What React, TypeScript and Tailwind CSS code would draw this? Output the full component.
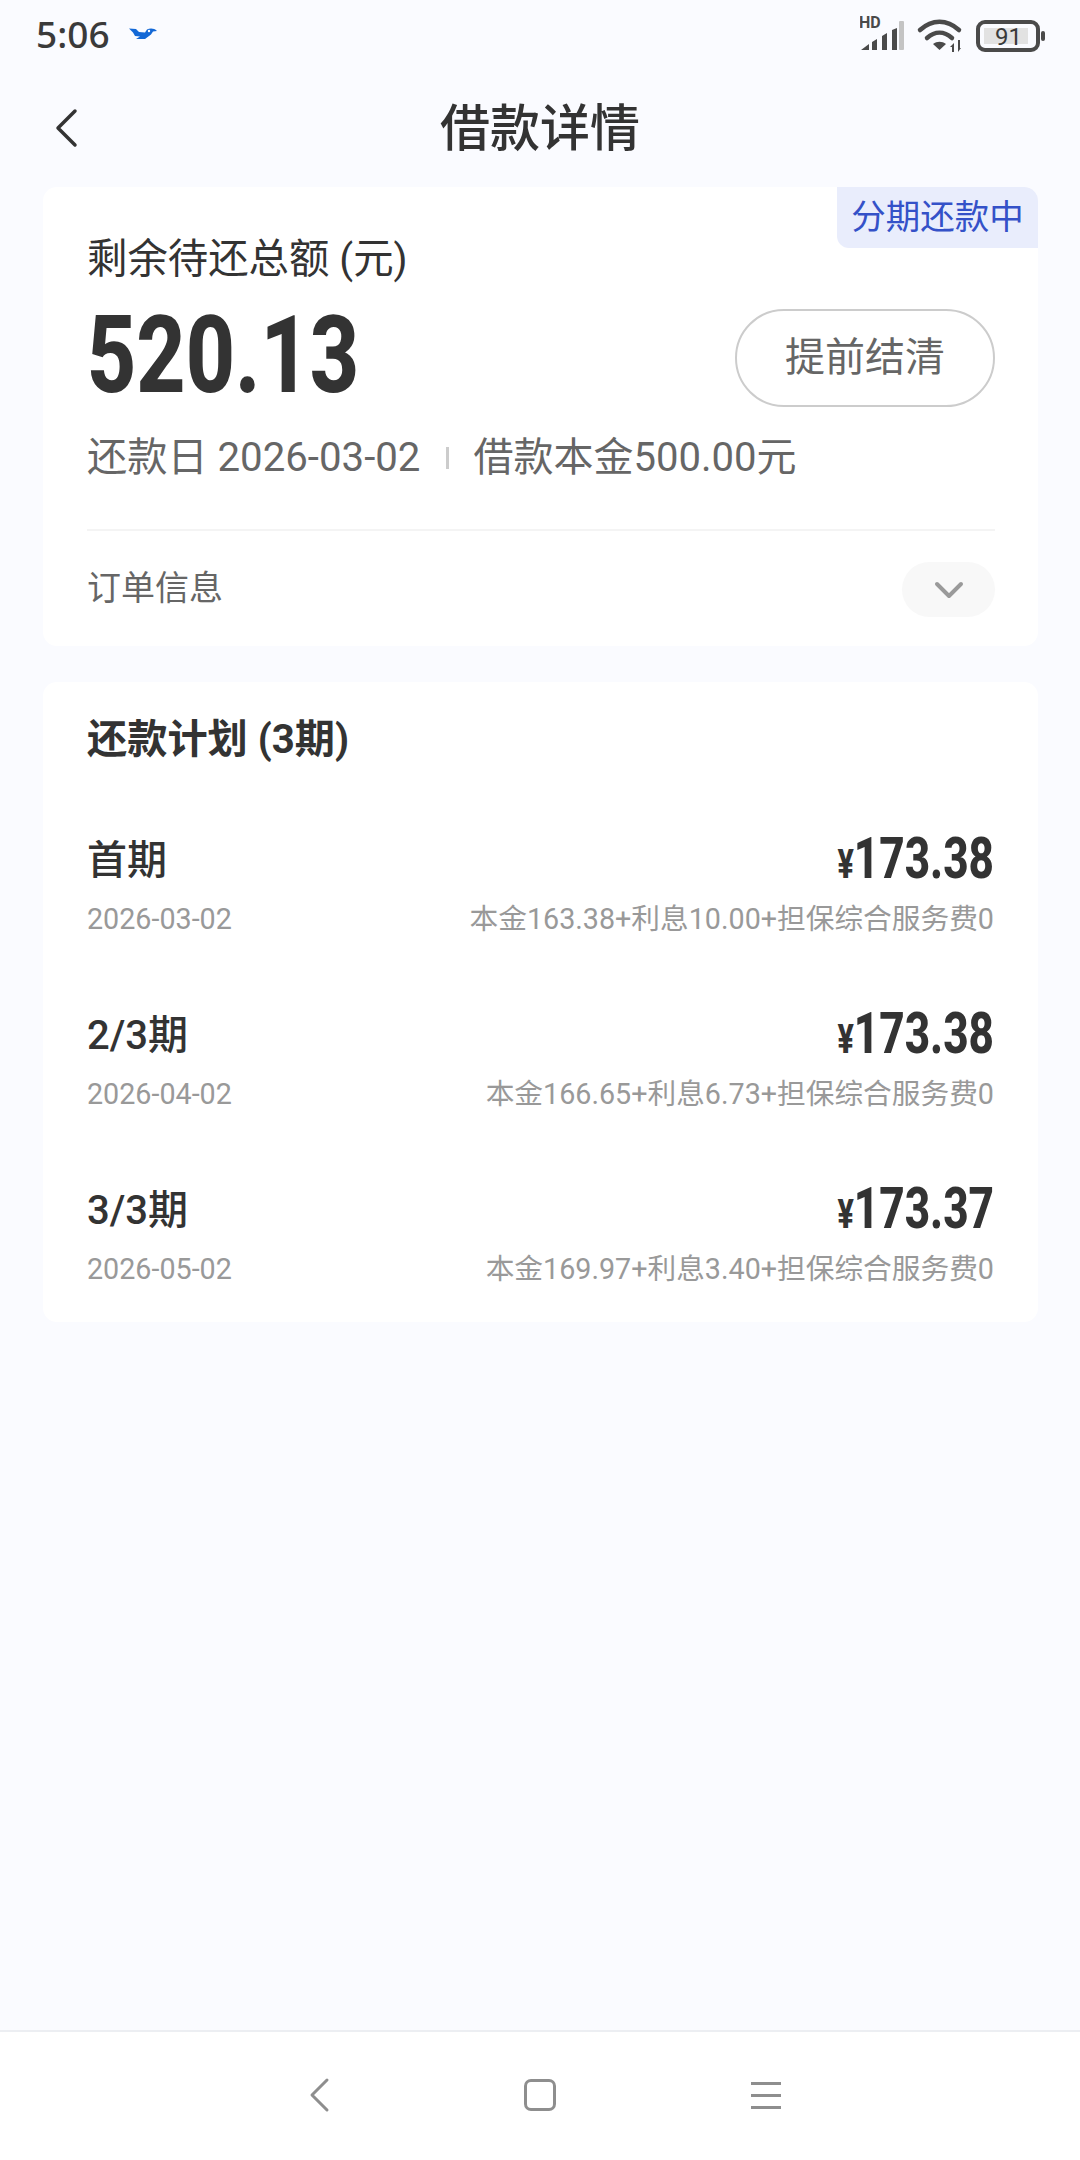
const FONT = "font-['Roboto','Noto_Sans_CJK_SC',sans-serif]";

const PLANS = [
  { id: 1, label: "首期", date: "2026-03-02", amount: "173.38", detail: "本金163.38+利息10.00+担保综合服务费0" },
  { id: 2, label: "2/3期", date: "2026-04-02", amount: "173.38", detail: "本金166.65+利息6.73+担保综合服务费0" },
  { id: 3, label: "3/3期", date: "2026-05-02", amount: "173.37", detail: "本金169.97+利息3.40+担保综合服务费0" },
];

const StatusIcons = () => (
  <svg width="190" height="40" viewBox="0 0 190 40" className="shrink-0">
    <text x="-1" y="15" fontSize="16" fontWeight="700" fill="#4a4a4a" fontFamily="Roboto, sans-serif">HD</text>
    <path d="M1 37l8-6v6zM12 29l5-3v11h-5zM22 23l5-3v17h-5zM32 17l5-2v22h-5z" fill="#4a4a4a" />
    <rect x="39" y="8" width="5" height="29" rx="1" fill="#c4c4c4" />
    <g fill="none" stroke="#4a4a4a" strokeWidth="4.500" strokeLinecap="round">
      <path d="M60 17c12-11 27-11 39 0" />
      <path d="M67 25c8-7 17-7 25 0" />
    </g>
    <path d="M73 31c4-3 9-3 13 0l-6.500 6z" fill="#4a4a4a" />
    <path d="M94 30l-4 4h2v5h2zM98 27v12l3-4h-1v-8z" fill="#4a4a4a" />
    <rect x="118" y="9" width="60" height="28" rx="7" fill="none" stroke="#4a4a4a" strokeWidth="4" />
    <rect x="124" y="15" width="44" height="16" fill="#e2e2e2" />
    <text x="135" y="32" fontSize="24" fill="#3a3a3a" fontFamily="Roboto, sans-serif">91</text>
    <rect x="181" y="18" width="4" height="10" rx="2" fill="#4a4a4a" />
  </svg>
);

const Bird = () => (
  <svg width="30" height="14" viewBox="0 0 30 14">
    <path d="M1 2.500l7 .5 3 3 6 .5 2-3c3-1.500 7-1.500 10 1.500l-4 .5-2 3-6 4.500H8l4-2.500-5-.5-2-3.500z" fill="#1368d6" />
    <circle cx="21" cy="5" r="1.200" fill="#fff" />
  </svg>
);

const App = () => {
  return (
    <div className={`${FONT} flex min-h-[2160px] w-[1080px] flex-col bg-[#fafbff] text-[#333]`}>
      <div className="flex h-[66px] items-center justify-between pl-[36px] pr-[30px]">
        <div className="flex items-center gap-[18px]">
          <span className="font-['Noto_Sans',sans-serif] text-[37px] font-medium leading-none text-[#3a3a3a]">5:06</span>
          <Bird />
        </div>
        <StatusIcons />
      </div>

      <header className="relative flex h-[121px] items-center justify-center pt-[5px]">
        <svg width="26" height="40" viewBox="0 0 26 40" className="absolute left-[54px] top-[42px]">
          <path d="M21 3L4 20l17 17" fill="none" stroke="#333" strokeWidth="3.500" strokeLinecap="round" strokeLinejoin="round" />
        </svg>
        <h1 className="text-[50px] font-medium leading-none">借款详情</h1>
      </header>

      <section className="relative ml-[43px] mr-[42px] flex h-[459px] flex-col rounded-[14px] bg-white pl-[44px] pr-[43px]">
        <div className="absolute right-0 top-0 flex h-[61px] w-[201px] items-center justify-center rounded-bl-[12px] rounded-tr-[14px] bg-[#e9edfc] text-[34.5px] leading-none text-[#3451c8]">
          分期还款中
        </div>

        <div className="pt-[50px] text-[40.4px] leading-[46px]">剩余待还总额 (元)</div>

        <div className="flex items-center justify-between pt-[18px]">
          <div className="h-[114px] origin-left scale-x-[0.8] text-[107px] font-extrabold leading-[110px] text-[#333]">520.13</div>
          <button className="flex h-[98px] w-[260px] items-center justify-center rounded-full border-2 border-[#ccc] text-[40px] text-[#666]">
            提前结清
          </button>
        </div>

        <div className="flex items-center pt-[18px] text-[40px] leading-[50px] text-[#666]">
          <span className="text-[40.2px]">还款日 2026-03-02</span>
          <span className="ml-[26px] mr-[24px] h-[22px] w-[3px] bg-[#ccc]" />
          <span>借款本金500.00元</span>
        </div>

        <div className="mt-[46px] h-[2px] bg-[#f4f4f4]" />

        <div className="flex flex-1 items-center justify-between pt-[2px]">
          <span className="pb-[3px] text-[34px] leading-none text-[#666]">订单信息</span>
          <span className="flex h-[55px] w-[93px] items-center justify-center rounded-full bg-[#f8f8f8]">
            <svg width="30" height="18" viewBox="0 0 30 18">
              <path d="M3 3l12 12L27 3" fill="none" stroke="#9a9a9a" strokeWidth="4" strokeLinecap="round" strokeLinejoin="round" />
            </svg>
          </span>
        </div>
      </section>

      <section className="ml-[43px] mr-[42px] mt-[36px] h-[640px] rounded-[14px] bg-white pl-[44px] pr-[44px]">
        <h2 className="pt-[35px] text-[40.2px] font-bold leading-[46px]">还款计划 (3期)</h2>
        <div className="flex flex-col gap-[65px] pt-[65px]">
          {PLANS.map((plan) => (
            <div key={plan.id} className="flex h-[110px] flex-col justify-between">
              <div className="flex items-center justify-between">
                <span className="pb-[5px] text-[40px] font-medium leading-[60px]">{plan.label}</span>
                <span className="origin-right scale-x-[0.76] pb-[4px] text-[58px] font-extrabold leading-[60px]">
                  <span className="text-[40px]">¥</span>
                  {plan.amount}
                </span>
              </div>
              <div className="flex items-center justify-between text-[28.7px] leading-[40px] text-[#999]">
                <span>{plan.date}</span>
                <span>{plan.detail}</span>
              </div>
            </div>
          ))}
        </div>
      </section>

      <nav className="mt-auto flex h-[130px] items-center border-t-2 border-[#eceef2] bg-white pb-[2px] pl-[305px]">
        <svg width="30" height="36" viewBox="0 0 30 36">
          <path d="M22 3L7 18l15 15" fill="none" stroke="#8e8e8e" strokeWidth="3" strokeLinecap="round" strokeLinejoin="round" />
        </svg>
        <div className="ml-[189px] h-[32px] w-[32px] rounded-[7px] border-[3px] border-[#8e8e8e]" />
        <div className="ml-[195px] flex w-[30px] flex-col gap-[9px]">
          <div className="h-[3px] bg-[#8e8e8e]" />
          <div className="h-[3px] bg-[#8e8e8e]" />
          <div className="h-[3px] bg-[#8e8e8e]" />
        </div>
      </nav>
    </div>
  );
};

export default App;
